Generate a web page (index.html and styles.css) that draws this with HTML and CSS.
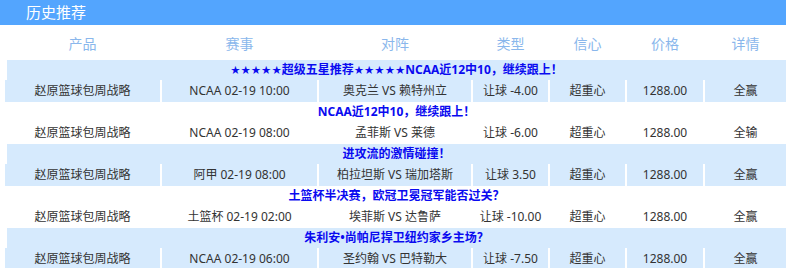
FILE: index.html
```html
<!DOCTYPE html>
<html lang="zh-CN">
<head>
<meta charset="utf-8">
<title>历史推荐</title>
<link rel="stylesheet" href="styles.css">
</head>
<body>
<div class="panel">
  <div class="panel-head">历史推荐</div>
  <div class="list">
    <div class="row heads">
      <span>产品</span><span>赛事</span><span>对阵</span><span>类型</span><span>信心</span><span>价格</span><span>详情</span>
    </div>

    <div class="group alt">
      <div class="title"><span class="stars">★★★★★</span>超级五星推荐<span class="stars">★★★★★</span>NCAA近12中10，继续跟上！</div>
      <div class="row data">
        <span>赵原篮球包周战略</span><span>NCAA 02-19 10:00</span><span>奥克兰 VS 赖特州立</span><span>让球 -4.00</span><span>超重心</span><span>1288.00</span><span>全赢</span>
      </div>
    </div>

    <div class="group">
      <div class="title">NCAA近12中10，继续跟上！</div>
      <div class="row data">
        <span>赵原篮球包周战略</span><span>NCAA 02-19 08:00</span><span>孟菲斯 VS 莱德</span><span>让球 -6.00</span><span>超重心</span><span>1288.00</span><span>全输</span>
      </div>
    </div>

    <div class="group alt">
      <div class="title">进攻流的激情碰撞！</div>
      <div class="row data">
        <span>赵原篮球包周战略</span><span>阿甲 02-19 08:00</span><span>柏拉坦斯 VS 瑞加塔斯</span><span>让球 3.50</span><span>超重心</span><span>1288.00</span><span>全赢</span>
      </div>
    </div>

    <div class="group">
      <div class="title">土篮杯半决赛，欧冠卫冕冠军能否过关？</div>
      <div class="row data">
        <span>赵原篮球包周战略</span><span>土篮杯 02-19 02:00</span><span>埃菲斯 VS 达鲁萨</span><span>让球 -10.00</span><span>超重心</span><span>1288.00</span><span>全赢</span>
      </div>
    </div>

    <div class="group alt">
      <div class="title">朱利安•尚帕尼捍卫纽约家乡主场？</div>
      <div class="row data">
        <span>赵原篮球包周战略</span><span>NCAA 02-19 06:00</span><span>圣约翰 VS 巴特勒大</span><span>让球 -7.50</span><span>超重心</span><span>1288.00</span><span>全赢</span>
      </div>
    </div>
  </div>
</div>
</body>
</html>
```

FILE: styles.css
```css
html, body {
  margin: 0;
  padding: 0;
  background: #ffffff;
}

body {
  font-family: "Noto Sans", "Noto Sans CJK SC", sans-serif;
  color: #333333;
  width: 786px;
  overflow: hidden;
}

.panel-head {
  height: 25px;
  line-height: 25px;
  background: #53a5fe;
  color: #ffffff;
  font-size: 15px;
  padding-left: 26px;
}

.list {
  padding-left: 5px;
}

.row {
  display: grid;
  grid-template-columns: 155px 155px 152px 75px 75px 76px 1fr;
  column-gap: 2px;
}

.row span {
  text-align: center;
  white-space: nowrap;
}

.heads {
  height: 35px;
  align-items: center;
  color: #8ab7ec;
  font-size: 14px;
}

.title {
  height: 20px;
  line-height: 20px;
  margin-left: 2px;
  text-align: center;
  color: #0a0af0;
  font-weight: bold;
  font-size: 12px;
  white-space: nowrap;
}

.stars {
  font-family: "DejaVu Sans", sans-serif;
  font-weight: normal;
  font-size: 11.5px;
}

.data {
  height: 22px;
  font-size: 12px;
}

.data span {
  line-height: 22px;
}

.alt .title,
.alt .data span {
  background: #d6eafd;
}
```
